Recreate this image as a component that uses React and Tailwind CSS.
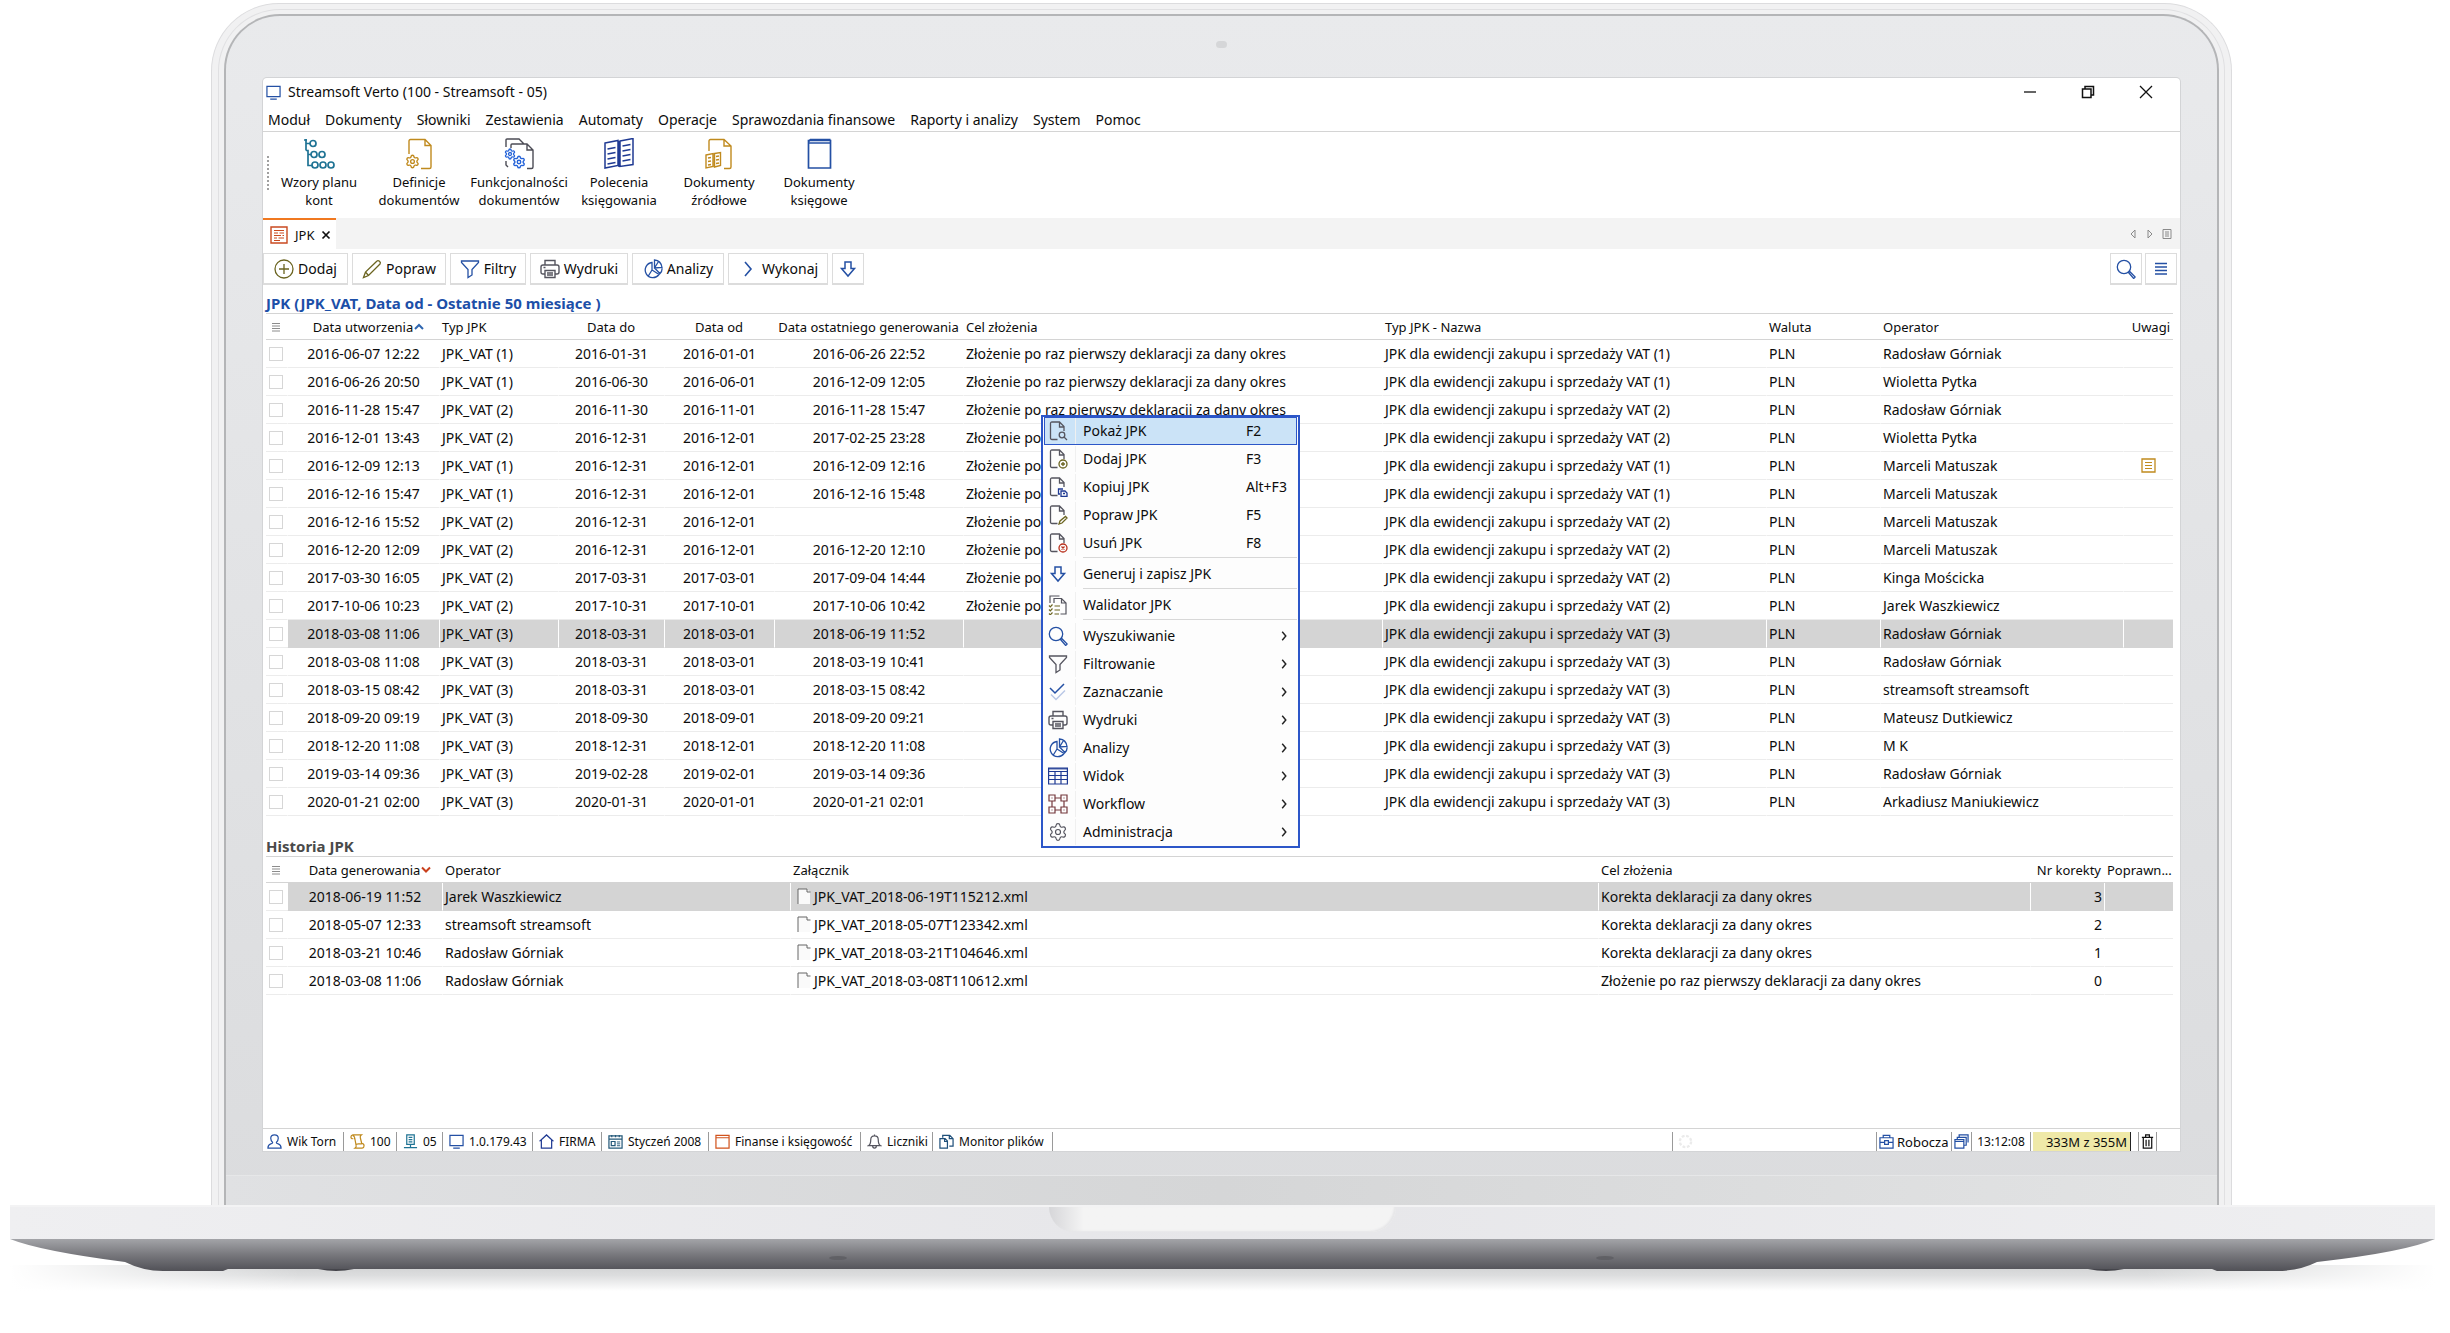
import React from "react";
import { Settings } from "lucide-react";

const BLUE = "#2450a4";
const NAVY = "#1f3a93";
const GOLD = "#c08a1e";
const GREY = "#55555f";
const OLIVE = "#6b6420";

function Icon({ size = 20, box = 20, color = GREY, width = 1.3, className = "", children }) {
  return (
    <svg width={size} height={size} viewBox={`0 0 ${box} ${box}`} fill="none" stroke={color} strokeWidth={width} className={`shrink-0 ${className}`} aria-hidden="true">
      {children}
    </svg>
  );
}

/* toolbar icons */
const TreeIcon = () => (
  <Icon size={32} box={32} color="#1f7394" width={1.7}>
    <path d="M1 2h3M3 1v11.500M3 5.500h4M3 12.500h2v15h4M5 16.500h3" />
    <circle cx="10" cy="5.500" r="3" />
    <circle cx="11" cy="16.500" r="3" />
    <circle cx="19" cy="16.500" r="3" />
    <circle cx="12" cy="27" r="3" />
    <circle cx="20" cy="27" r="3" />
    <circle cx="28" cy="27" r="3" />
  </Icon>
);
const DocGearIcon = () => (
  <Icon size={32} box={32} color={GOLD} width={1.4}>
    <path d="M6 16V3q0-1.500 1.500-1.500H22l6 6V29q0 1.500-1.500 1.500H18M22 2v5.500h5.500" />
    <Settings x="2" y="16" size={15} color={GOLD} strokeWidth={2.200} />
  </Icon>
);
const DocsGearsIcon = () => (
  <Icon size={32} box={32} color="#4c4c55" width={1.4}>
    <path d="M3 9V2q0-1 1-1h12l5 5M8 10V7q0-1 1-1h15l6 6v17q0 1.500-1.500 1.500H24M24 6.500V12h5.500M3 23v4l2 2" />
    <Settings x="1" y="10" size={12} color="#2563d8" strokeWidth={2.600} />
    <Settings x="9" y="17" size={14} color="#2563d8" strokeWidth={2.400} />
  </Icon>
);
const LedgerIcon = () => (
  <Icon size={32} box={32} color={NAVY} width={1.5}>
    <path d="M2 5l13-2.500v25L2 30zM17 3l13-2.500v26L17 28.500zM16 3v26M4.500 11l8-1.500M4.500 16l8-1.500M4.500 21l8-1.500M4.500 26l8-1.500M19.500 8l8-1.500M19.500 13l8-1.500M19.500 18l8-1.500M19.500 23l8-1.500" />
  </Icon>
);
const DocLedgerIcon = () => (
  <Icon size={32} box={32} color={GOLD} width={1.4}>
    <path d="M6 13V3q0-1.500 1.500-1.500H21l7 6.500V29q0 1.500-1.500 1.500H21M21 2v6h6.500" />
    <path d="M3 17l7-1.500v13L3 30zM11.500 15.500l6-1v13l-6 1.500zM5 20l3-.500M5 23.500l3-.500M5 27l3-.500M13 18.500l3-.500M13 22l3-.500M13 25.500l3-.500" />
  </Icon>
);
const BookIcon = () => (
  <Icon size={32} box={32} color={BLUE} width={1.7}>
    <path d="M5.500 2.500h22v27.500h-22zM5.500 5h22" />
    <path d="M27.500 1.500h-20l-2 2" />
  </Icon>
);

/* action icons, 20px grid */
const PlusIcon = () => (
  <Icon color={OLIVE}>
    <circle cx="10" cy="10" r="9" />
    <path d="M10 5v10M5 10h10" />
  </Icon>
);
const PencilIcon = () => (
  <Icon color={OLIVE}>
    <path d="M1.500 18.500l2-5.500L15 2q1-1 2.500.300T18 5L6.500 16.500zM3.500 13l3 3.500" />
  </Icon>
);
const FunnelIcon = ({ color = BLUE }) => (
  <Icon color={color}>
    <path d="M1.500 2h17v1.500L12 10.500V16l-4 2.500v-8L1.500 3.500z" />
  </Icon>
);
const PrinterIcon = () => (
  <Icon color={GREY} width={1.4}>
    <path d="M5 6V1.500h10V6M5 15H3q-2 0-2-2V8q0-2 2-2h14q2 0 2 2v5q0 2-2 2h-2M5 11.500h10v7H5zM7 14h6M7 16h6M3.500 8.500h2" />
  </Icon>
);
const PieIcon = () => (
  <Icon color={BLUE}>
    <path d="M9 3.500A7.600 7.600 0 1 0 16 15.500L9 11zM9 11l-4 6.500M11.500 9V1q6.500.500 7.500 7.500zM11.500 9l4-6.500M19 8.500q.500 3.500-2 6l-5.500-5.500" />
  </Icon>
);
const ArrowDownIcon = () => (
  <Icon color={BLUE} width={1.5}>
    <path d="M7 3h6v6.500h3.500L10 17 3.500 9.500H7z" />
  </Icon>
);
const SearchIcon = () => (
  <Icon color={BLUE}>
    <circle cx="8" cy="8" r="6.700" />
    <path d="M12.500 13.500l1.200-1 5.500 5.500-1.500 1.500z" />
  </Icon>
);
const LinesIcon = () => (
  <Icon size={14} box={14} color={BLUE} width={1.7}>
    <path d="M1 1.500h12M1 5h12M1 8.500h12M1 12h12" />
  </Icon>
);
const ChevronIcon = ({ size = 20, color = BLUE, width = 1.6 }) => (
  <Icon size={size} color={color} width={width}>
    <path d="M7 3l6 7-6 7" />
  </Icon>
);

/* context menu icons */
function DocIcon({ children }) {
  return (
    <Icon>
      <path d="M9.500 18.500H4q-1.500 0-1.500-1.500V2.500Q2.500 1 4 1h7.500L16 5.500V10M11.500 1v5H16" />
      {children}
    </Icon>
  );
}
const DocSearch = () => (
  <DocIcon>
    <circle cx="14" cy="14" r="2.800" />
    <path d="M16 16l3 3" />
  </DocIcon>
);
const DocPlus = () => (
  <DocIcon>
    <g stroke={OLIVE}>
      <circle cx="15" cy="15" r="4" />
      <path d="M15 13v4M13 15h4" />
    </g>
  </DocIcon>
);
const DocCopy = () => (
  <DocIcon>
    <path d="M12 17h-1.500v-5H15M13 14h4l2 2v3.500h-6zM15 16.500h2" stroke={NAVY} />
  </DocIcon>
);
const DocEdit = () => (
  <DocIcon>
    <path d="M11 19l1-3 5.500-4.500 1.500 1.500-5 5z" stroke={OLIVE} />
  </DocIcon>
);
const DocDelete = () => (
  <DocIcon>
    <g stroke="#b8301c">
      <circle cx="15" cy="15" r="4" />
      <path d="M13.500 13.500l3 3M16.500 13.500l-3 3" />
    </g>
  </DocIcon>
);
const ValidatorIcon = () => (
  <Icon width={1.2}>
    <path d="M2 8V1h9.500M6 8V3.500h7.500L18 8v11h-5.500M13.500 4v4H18" />
    <path d="M1 10.500l1.300 1.300L4.500 9.500M1 14.500l1.300 1.300L4.500 13.500M1 18.500l1.300 1.300L4.500 17.500M6.500 11H12M6.500 15H12M6.500 19H11" stroke={OLIVE} />
  </Icon>
);
const CheckIcon = () => (
  <Icon color={BLUE} width={1.5}>
    <path d="M3 12.500l5 5 9-9" stroke="#b9c7e6" />
    <path d="M2 6l5 5L16 2" />
  </Icon>
);
const GridIcon = () => (
  <Icon color={NAVY} width={1.2}>
    <path d="M.600 2h18.800v16H.600zM.600 5.500h18.800M.600 9.500h18.800M.600 13.500h18.800M7 5.500V18M13 5.500V18" />
    <path d="M.600 2.800h18.800" />
  </Icon>
);
const WorkflowIcon = () => (
  <Icon color="#74383c" width={1.2}>
    <path d="M1 1h6v6H1zM13 1h6v6h-6zM1 13h6v6H1zM13 13h6v6h-6zM7 4h6M7 16h6M4 7v6M16 7v6" />
    <path d="M3.500 4h1M15.500 4h1M3.500 16h1M15.500 16h1" />
  </Icon>
);
const GearIcon = () => <Settings size={20} color={GREY} strokeWidth={1.400} className="shrink-0" aria-hidden="true" />;

/* small icons: window title and status bar */
function Small({ color, children }) {
  return (
    <Icon size={15} box={16} color={color} width={1.3}>
      {children}
    </Icon>
  );
}
const MonitorIcon = () => (
  <Small color={BLUE}>
    <path d="M1 1.500h14v11H1zM4.500 15h7" />
  </Small>
);
const UserIcon = () => (
  <Small color={BLUE}>
    <path d="M6 9Q4 7 4 4.500 4 1 8 1t4 3.500Q12 7 10 9q0 1 2 1.500 3 .800 3 4.500H1q0-3.700 3-4.500Q6 10 6 9z" />
  </Small>
);
const ScrollIcon = () => (
  <Small color={GOLD}>
    <path d="M3 5Q1 5 1 3.200T3 1h9q-1.500 1-1 3l1.500 6q2.500.300 2.500 2.500T13 15H5.500q1.500-1 1-3L5 4q-.300-2-2-2M4 5h1M6.500 12.500Q6 10.500 9 10.500h3.500" />
  </Small>
);
const ServerIcon = () => (
  <Small color="#1f7394">
    <path d="M4 1h8v10H4zM6 3.500h4M6 6h4M6 8.500h4M8 11v3.500M1 14.500h14" />
  </Small>
);
const HouseIcon = () => (
  <Small color={NAVY}>
    <path d="M2.500 15V7H1.500L8 1l6.500 6h-1v8z" />
  </Small>
);
const CalendarIcon = () => (
  <Small color="#25597a">
    <path d="M1 2h14v13H1zM1 5.500h14M4 1v2.500M8 1v2.500M12 1v2.500M3.500 8h4v4.500h-4z" />
    <path d="M9.500 8.500H13M9.500 10.500H13M9.500 12.500H13" strokeWidth="1" />
  </Small>
);
const ModuleIcon = () => (
  <Small color="#d1531d">
    <path d="M1 1.500h14V15H1zM1 4h14" />
  </Small>
);
const BellIcon = () => (
  <Small color={GREY}>
    <path d="M1.500 12.500Q4 11 4 6q0-4 4-4t4 4q0 5 2.500 6.500zM6 12.500q0 2.500 2 2.500t2-2.500M8 2V.500" />
  </Small>
);
const FilesIcon = () => (
  <Small color="#1f4f7a">
    <path d="M1 5h5.500L9 7.500V15H1zM6 5v3h3M4 4V1.500h7.500L15 5v8h-4M11 1.500V5h4" />
  </Small>
);
const CaseIcon = () => (
  <Small color={BLUE}>
    <path d="M1 4h14v11H1zM4.500 4V1.500h7V4M1 9h5M10 9h5M6 7h4v4H6z" />
  </Small>
);
const WindowsIcon = () => (
  <Small color={BLUE}>
    <path d="M1 6h9.500v9H1zM1 8h9.500M3.500 5.500v-2H13V12h-2M5.500 3V1H15v8" />
  </Small>
);
const TrashIcon = () => (
  <Small color="#111">
    <path d="M2 3.500h12M6 3V1h4v2M3.500 4v11h9V4M6.500 6v7M9.500 6v7" />
  </Small>
);
const SpinnerIcon = () => (
  <Small color="#ebebeb">
    <circle cx="8" cy="8" r="6" strokeWidth="2.500" strokeDasharray="3 1.700" />
  </Small>
);

const menus = ["Moduł", "Dokumenty", "Słowniki", "Zestawienia", "Automaty", "Operacje", "Sprawozdania finansowe", "Raporty i analizy", "System", "Pomoc"];

const shortcuts = [
  [TreeIcon, "Wzory planu", "kont"],
  [DocGearIcon, "Definicje", "dokumentów"],
  [DocsGearsIcon, "Funkcjonalności", "dokumentów"],
  [LedgerIcon, "Polecenia", "księgowania"],
  [DocLedgerIcon, "Dokumenty", "źródłowe"],
  [BookIcon, "Dokumenty", "księgowe"],
];

const FIRST = "Złożenie po raz pierwszy deklaracji za dany okres";
const FIX = "Korekta deklaracji za dany okres";

const rows = [
  ["2016-06-07 12:22", 1, "2016-01-31", "2016-01-01", "2016-06-26 22:52", FIRST, "Radosław Górniak"],
  ["2016-06-26 20:50", 1, "2016-06-30", "2016-06-01", "2016-12-09 12:05", FIRST, "Wioletta Pytka"],
  ["2016-11-28 15:47", 2, "2016-11-30", "2016-11-01", "2016-11-28 15:47", FIRST, "Radosław Górniak"],
  ["2016-12-01 13:43", 2, "2016-12-31", "2016-12-01", "2017-02-25 23:28", FIRST, "Wioletta Pytka"],
  ["2016-12-09 12:13", 1, "2016-12-31", "2016-12-01", "2016-12-09 12:16", FIRST, "Marceli Matuszak", true],
  ["2016-12-16 15:47", 1, "2016-12-31", "2016-12-01", "2016-12-16 15:48", FIRST, "Marceli Matuszak"],
  ["2016-12-16 15:52", 2, "2016-12-31", "2016-12-01", "", FIRST, "Marceli Matuszak"],
  ["2016-12-20 12:09", 2, "2016-12-31", "2016-12-01", "2016-12-20 12:10", FIRST, "Marceli Matuszak"],
  ["2017-03-30 16:05", 2, "2017-03-31", "2017-03-01", "2017-09-04 14:44", FIRST, "Kinga Mościcka"],
  ["2017-10-06 10:23", 2, "2017-10-31", "2017-10-01", "2017-10-06 10:42", FIRST, "Jarek Waszkiewicz"],
  ["2018-03-08 11:06", 3, "2018-03-31", "2018-03-01", "2018-06-19 11:52", "", "Radosław Górniak"],
  ["2018-03-08 11:08", 3, "2018-03-31", "2018-03-01", "2018-03-19 10:41", "", "Radosław Górniak"],
  ["2018-03-15 08:42", 3, "2018-03-31", "2018-03-01", "2018-03-15 08:42", "", "streamsoft streamsoft"],
  ["2018-09-20 09:19", 3, "2018-09-30", "2018-09-01", "2018-09-20 09:21", "", "Mateusz Dutkiewicz"],
  ["2018-12-20 11:08", 3, "2018-12-31", "2018-12-01", "2018-12-20 11:08", "", "M K"],
  ["2019-03-14 09:36", 3, "2019-02-28", "2019-02-01", "2019-03-14 09:36", "", "Radosław Górniak"],
  ["2020-01-21 02:00", 3, "2020-01-31", "2020-01-01", "2020-01-21 02:01", "", "Arkadiusz Maniukiewicz"],
];

const history = [
  ["2018-06-19 11:52", "Jarek Waszkiewicz", "JPK_VAT_2018-06-19T115212.xml", FIX, 3],
  ["2018-05-07 12:33", "streamsoft streamsoft", "JPK_VAT_2018-05-07T123342.xml", FIX, 2],
  ["2018-03-21 10:46", "Radosław Górniak", "JPK_VAT_2018-03-21T104646.xml", FIX, 1],
  ["2018-03-08 11:06", "Radosław Górniak", "JPK_VAT_2018-03-08T110612.xml", FIRST, 0],
];

const contextMenu = [
  [
    [DocSearch, "Pokaż JPK", "F2"],
    [DocPlus, "Dodaj JPK", "F3"],
    [DocCopy, "Kopiuj JPK", "Alt+F3"],
    [DocEdit, "Popraw JPK", "F5"],
    [DocDelete, "Usuń JPK", "F8"],
  ],
  [[ArrowDownIcon, "Generuj i zapisz JPK", ""]],
  [[ValidatorIcon, "Walidator JPK", ""]],
  [
    [SearchIcon, "Wyszukiwanie"],
    [() => <FunnelIcon color={GREY} />, "Filtrowanie"],
    [CheckIcon, "Zaznaczanie"],
    [PrinterIcon, "Wydruki"],
    [PieIcon, "Analizy"],
    [GridIcon, "Widok"],
    [WorkflowIcon, "Workflow"],
    [GearIcon, "Administracja"],
  ],
];

function TitleBar() {
  return (
    <header className="flex h-[28px] items-center justify-between pl-[3px] pr-[22px]">
      <div className="flex items-center gap-[7px]">
        <MonitorIcon />
        <h1>Streamsoft Verto (100 - Streamsoft - 05)</h1>
      </div>
      <div className="flex gap-[34px]">
        <button aria-label="Minimalizuj" className="flex w-6 justify-center">
          <Icon size={14} box={14} color="#111"><path d="M1 7h12" /></Icon>
        </button>
        <button aria-label="Przywróć" className="flex w-6 justify-center">
          <Icon size={14} box={14} color="#111" width={1.5}><path d="M1.500 4h8.500v8.500H1.500zM4 4V1.500h8.500V10H10" /></Icon>
        </button>
        <button aria-label="Zamknij" className="flex w-6 justify-center">
          <Icon size={14} box={14} color="#111"><path d="M1 1l12 12M13 1L1 13" /></Icon>
        </button>
      </div>
    </header>
  );
}

function MenuBar() {
  return (
    <nav className="flex h-[26px] items-center gap-[15px] border-b border-[#d4d4d4] pl-[5px] pt-[3px]">
      {menus.map((m) => (
        <button key={m}>{m}</button>
      ))}
    </nav>
  );
}

function Shortcuts() {
  return (
    <div className="flex h-[86px] items-start pl-1 pt-[6px]">
      <div className="mt-[18px] h-[34px] border-l-2 border-dotted border-[#a0a0a0]" />
      {shortcuts.map(([Pic, a, b]) => (
        <button key={a + b} className="flex w-[100px] flex-col items-center text-[13px] leading-[18px]">
          <Pic />
          <span className="mt-[3px]">{a}</span>
          <span>{b}</span>
        </button>
      ))}
    </div>
  );
}

function TabStrip() {
  return (
    <div className="flex h-[31px] items-center justify-between bg-[#f3f3f3] pr-2">
      <div className="flex h-full w-[73px] items-center gap-[7px] border-t-2 border-[#f07820] bg-white pl-[7px] text-[13px]">
        <Icon size={18} box={18} color="#c94a20" width={1.4}>
          <path d="M1 1h16v16H1z" />
          <path d="M4 4.500h10M4 7h4M9.500 7H14M4 9.500h7M12.500 9.500H14M4 12h3M8.500 12H14M4 14.500h6" strokeWidth="1.200" />
        </Icon>
        <span>JPK</span>
        <button aria-label="Zamknij kartę">
          <Icon size={10} box={10} color="#111" width={1.7}><path d="M1.500 1.500l7 7M8.500 1.500l-7 7" /></Icon>
        </button>
      </div>
      <div className="flex items-center gap-[7px]">
        <button aria-label="Poprzednia karta"><Icon size={10} box={10} color="#8a8a8a" width={1}><path d="M7 1L3 5l4 4z" /></Icon></button>
        <button aria-label="Następna karta"><Icon size={10} box={10} color="#8a8a8a" width={1}><path d="M3 1l4 4-4 4z" /></Icon></button>
        <button aria-label="Lista kart"><Icon size={10} box={10} color="#8a8a8a" width={1}><path d="M1 .500h8v9H1zM3 3h4M3 5h4M3 7h4" /></Icon></button>
      </div>
    </div>
  );
}

function ToolButton({ icon: Pic, label, title, className = "" }) {
  return (
    <button aria-label={label || title} className={`flex h-full items-center justify-center gap-1 border border-[#dcdcdc] bg-white shadow-[0_1px_0_#dcdcdc] ${className}`}>
      <Pic />
      {label && <span>{label}</span>}
    </button>
  );
}

function Toolbar() {
  return (
    <div className="mt-1 flex h-[31px] justify-between pr-[3px]">
      <div className="flex gap-1">
        <ToolButton icon={PlusIcon} label="Dodaj" className="w-[85px]" />
        <ToolButton icon={PencilIcon} label="Popraw" className="w-[94px]" />
        <ToolButton icon={FunnelIcon} label="Filtry" className="w-[76px]" />
        <ToolButton icon={PrinterIcon} label="Wydruki" className="w-[98px]" />
        <ToolButton icon={PieIcon} label="Analizy" className="w-[92px]" />
        <ToolButton icon={ChevronIcon} label="Wykonaj" className="w-[100px]" />
        <ToolButton icon={ArrowDownIcon} title="Więcej" className="w-8" />
      </div>
      <div className="flex gap-[3px]">
        <ToolButton icon={SearchIcon} title="Szukaj" className="w-8" />
        <ToolButton icon={LinesIcon} title="Opcje" className="w-8" />
      </div>
    </div>
  );
}

function Th({ children, align = "text-left" }) {
  return <th className={`h-[27px] whitespace-nowrap border-y border-[#d4d4d4] px-[3px] py-0 text-[13px] font-normal ${align}`}>{children}</th>;
}

function Td({ children, selected, className = "" }) {
  const look = selected ? "border-b-[#d4d4d4] border-l border-l-white bg-[#d4d4d4]" : "border-l border-l-transparent border-b-[#ececec]";
  return <td className={`h-[28px] truncate border-b px-[2px] py-0 ${look} ${className}`}>{children}</td>;
}

function CheckCell({ label }) {
  return (
    <td className="h-[28px] border-b border-[#ececec] p-0 pl-[3px]">
      <input type="checkbox" aria-label={label} className="block size-[14px] appearance-none border border-[#d6d6d6] bg-white" />
    </td>
  );
}

function ListTh() {
  return (
    <Th>
      <Icon size={10} box={10} color="#8c8c8c" width={1} className="ml-[2px]"><path d="M1 1.500h8M1 4h8M1 6.500h8M1 9h8" /></Icon>
    </Th>
  );
}

function SortLabel({ children, down }) {
  return (
    <span className="relative">
      {children}
      <svg width="10" height="8" viewBox="0 0 10 8" fill="none" strokeWidth="2" stroke={down ? "#c9401c" : "#2f66b0"} className="absolute left-full top-[5px] ml-px" aria-hidden="true">
        <path d={down ? "M1 1.500l4 4 4-4" : "M1 6l4-4 4 4"} />
      </svg>
    </span>
  );
}

function JpkTable() {
  return (
    <table className="w-full table-fixed border-separate border-spacing-0">
      <colgroup>
        <col className="w-[21px]" />
        <col className="w-[152px]" />
        <col className="w-[119px]" />
        <col className="w-[106px]" />
        <col className="w-[110px]" />
        <col className="w-[189px]" />
        <col />
        <col className="w-[384px]" />
        <col className="w-[114px]" />
        <col className="w-[243px]" />
        <col className="w-[50px]" />
      </colgroup>
      <thead>
        <tr>
          <ListTh />
          <Th align="text-center"><SortLabel>Data utworzenia</SortLabel></Th>
          <Th>Typ JPK</Th>
          <Th align="text-center">Data do</Th>
          <Th align="text-center">Data od</Th>
          <Th align="text-center">Data ostatniego generowania</Th>
          <Th>Cel złożenia</Th>
          <Th>Typ JPK - Nazwa</Th>
          <Th>Waluta</Th>
          <Th>Operator</Th>
          <Th align="text-right">Uwagi</Th>
        </tr>
      </thead>
      <tbody>
        {rows.map(([created, type, to, from, last, purpose, operator, note], i) => {
          const selected = i === 10;
          return (
            <tr key={created}>
              <CheckCell label={created} />
              <Td selected={selected} className="text-center">{created}</Td>
              <Td selected={selected}>JPK_VAT ({type})</Td>
              <Td selected={selected} className="text-center">{to}</Td>
              <Td selected={selected} className="text-center">{from}</Td>
              <Td selected={selected} className="text-center">{last}</Td>
              <Td selected={selected}>{purpose}</Td>
              <Td selected={selected}>JPK dla ewidencji zakupu i sprzedaży VAT ({type})</Td>
              <Td selected={selected}>PLN</Td>
              <Td selected={selected}>{operator}</Td>
              <Td selected={selected}>
                {note && (
                  <Icon size={15} box={15} color={GOLD} className="mx-auto"><path d="M1 1h13v13H1z" /><path d="M4 4.500h7M4 7.500h7M4 10.500h7" strokeWidth="1" /></Icon>
                )}
              </Td>
            </tr>
          );
        })}
      </tbody>
    </table>
  );
}

function HistoryTable() {
  return (
    <table className="w-full table-fixed border-separate border-spacing-0">
      <colgroup>
        <col className="w-[21px]" />
        <col className="w-[155px]" />
        <col className="w-[348px]" />
        <col />
        <col className="w-[432px]" />
        <col className="w-[74px]" />
        <col className="w-[69px]" />
      </colgroup>
      <thead>
        <tr>
          <ListTh />
          <Th align="text-center"><SortLabel down>Data generowania</SortLabel></Th>
          <Th>Operator</Th>
          <Th>Załącznik</Th>
          <Th>Cel złożenia</Th>
          <Th align="text-right">Nr korekty</Th>
          <Th>Poprawn...</Th>
        </tr>
      </thead>
      <tbody>
        {history.map(([date, operator, file, purpose, nr], i) => {
          const selected = i === 0;
          return (
            <tr key={date}>
              <CheckCell label={date} />
              <Td selected={selected} className="text-center">{date}</Td>
              <Td selected={selected}>{operator}</Td>
              <Td selected={selected}>
                <a href="#" className="flex items-center gap-[3px] pl-1">
                  <svg width="14" height="17" viewBox="0 0 14 17" fill="#fafafa" aria-hidden="true">
                    <path d="M1 16V1h9l3 3v12z" />
                    <path d="M1 16V1h9v3h3.500" fill="none" stroke="#666" />
                  </svg>
                  {file}
                </a>
              </Td>
              <Td selected={selected}>{purpose}</Td>
              <Td selected={selected} className="text-right">{nr}</Td>
              <Td selected={selected} />
            </tr>
          );
        })}
      </tbody>
    </table>
  );
}

function ContextMenu() {
  return (
    <div role="menu" className="absolute left-[778px] top-[337px] w-[259px] border-2 border-[#2c56c8] bg-[#fdfdfd] px-px">
      {contextMenu.map((group, g) => (
        <div key={g}>
          {g > 0 && <hr className="ml-[39px] h-[3px] border-0 border-t border-[#d8d8d8]" />}
          {group.map(([Pic, label, keys], i) => (
            <button
              key={label}
              role="menuitem"
              className={`flex h-[28px] w-full items-center border pr-[3px] text-left ${g === 0 && i === 0 ? "border-[#2c56c8] bg-[#cbe3f7]" : "border-transparent"}`}
            >
              <span className="ml-[3px] mr-[7px] flex"><Pic /></span>
              <span className="h-full w-2 border-l border-[#f0f0f0]" />
              <span className="flex-1">{label}</span>
              {keys === undefined ? <span className="mr-[3px]"><ChevronIcon size={12} color="#222" width={2.4} /></span> : <span className="w-[47px] whitespace-nowrap">{keys}</span>}
            </button>
          ))}
        </div>
      ))}
    </div>
  );
}

function Status({ icon: Pic, children, className = "" }) {
  return (
    <div className={`flex h-full items-center whitespace-nowrap border-r border-[#9a9a9a] ${className}`}>
      {Pic && <Pic />}
      {children}
    </div>
  );
}

function StatusBar() {
  return (
    <footer className="flex h-[23px] items-end justify-between border-t border-[#d4d4d4] pl-1 text-[12px]">
      <div className="flex h-[19px]">
        <Status icon={UserIcon} className="w-[77px] gap-[5px]">Wik Torn</Status>
        <Status icon={ScrollIcon} className="w-[53px] gap-[5px] pl-[6px]">100</Status>
        <Status icon={ServerIcon} className="w-[46px] gap-[5px] pl-[6px]">05</Status>
        <Status icon={MonitorIcon} className="w-[90px] gap-[5px] pl-[6px]">1.0.179.43</Status>
        <Status icon={HouseIcon} className="w-[69px] gap-[5px] pl-[6px]">FIRMA</Status>
        <Status icon={CalendarIcon} className="w-[107px] gap-[5px] pl-[6px]">Styczeń 2008</Status>
        <Status icon={ModuleIcon} className="w-[152px] gap-[5px] pl-[6px]">Finanse i księgowość</Status>
        <Status icon={BellIcon} className="w-[72px] gap-[5px] pl-[6px]">Liczniki</Status>
        <Status icon={FilesIcon} className="w-[120px] gap-[5px] pl-[6px]">Monitor plików</Status>
      </div>
      <div className="flex h-[19px] pr-[23px]">
        <Status icon={SpinnerIcon} className="w-[205px] border-l pl-[5px]" />
        <Status icon={CaseIcon} className="w-[75px] gap-[3px] pl-[2px] text-[13px]">Robocza</Status>
        <Status icon={WindowsIcon} className="w-5 pl-[2px]" />
        <Status className="w-[59px] justify-center">13:12:08</Status>
        <Status className="ml-[2px] w-[98px] justify-end border-r-[#222] bg-[#efe9a8] pr-[3px] text-[13px]">333M z 355M</Status>
        <div className="ml-[7px] flex w-[19px] items-center justify-center border-x border-[#9a9a9a]">
          <button aria-label="Zwolnij pamięć"><TrashIcon /></button>
        </div>
      </div>
    </footer>
  );
}

function AppWindow() {
  return (
    <div className="relative rounded-t-sm bg-white text-[14px] leading-5 text-[#0c0c0c] shadow-[0_0_0_1px_#d3d4d6]">
      <TitleBar />
      <MenuBar />
      <Shortcuts />
      <TabStrip />
      <Toolbar />
      <main className="min-h-[844px] pl-[3px] pr-[7px]">
        <h2 className="h-[29px] pt-[9px] text-[15px] font-bold text-[#1c4fa8]">JPK (JPK_VAT, Data od - Ostatnie 50 miesiące )</h2>
        <JpkTable />
        <h2 className="h-[40px] pt-5 text-[15px] font-bold text-[#4a4a4a]">Historia JPK</h2>
        <HistoryTable />
      </main>
      <StatusBar />
      <ContextMenu />
    </div>
  );
}

function LaptopBase() {
  return (
    <div className="ml-[10px] mr-[15px]">
      <div className="flex h-[34px] justify-center border-t-2 border-[#f3f3f4] bg-linear-to-r from-[#efeff1] via-[#e6e6e9] to-[#efeff1]">
        <div className="h-[25px] w-[347px] rounded-b-[25px] bg-linear-to-r from-[#d6d6d9] via-[#f4f4f4] via-10% to-[#f4f4f4] shadow-[inset_-2px_-1px_2px_#e6e6e8]" />
      </div>
      <svg width="100%" height="54" viewBox="0 0 2425 54" preserveAspectRatio="none" className="block" aria-hidden="true">
        <defs>
          <linearGradient id="metal" x1="0" x2="0" y1="0" y2="1">
            <stop offset="0" stopColor="#a3a4a8" />
            <stop offset=".5" stopColor="#77777c" />
            <stop offset="1" stopColor="#515157" />
          </linearGradient>
          <linearGradient id="shade" x1="0" x2="0" y1="0" y2="1">
            <stop offset="0" stopColor="#cfd0d1" />
            <stop offset=".4" stopColor="#dcddde" />
            <stop offset="1" stopColor="#fff" />
          </linearGradient>
          <linearGradient id="fade" x1="0" x2="1" y1="0" y2="0">
            <stop offset="0" stopColor="#fff" />
            <stop offset=".12" stopColor="#fff" stopOpacity="0" />
            <stop offset=".88" stopColor="#fff" stopOpacity="0" />
            <stop offset="1" stopColor="#fff" />
          </linearGradient>
        </defs>
        <rect y="26" width="2425" height="26" fill="url(#shade)" />
        <rect y="26" width="2425" height="26" fill="url(#fade)" />
        <path d="M0 0h2425q-30 13-118 23-18 9-40 9h-60l-5-2H218l-5 2h-60q-20 0-38-9Q30 12 0 0z" fill="url(#metal)" />
        <path d="M308 30h36q-18 4-36 0zM2078 30h36q-18 4-36 0z" fill="#45454b" />
        <ellipse cx="828" cy="19" rx="9" ry="2" fill="#606065" />
        <ellipse cx="1595" cy="19" rx="9" ry="2" fill="#606065" />
      </svg>
    </div>
  );
}

export default function App() {
  return (
    <div className="min-h-screen w-full bg-white pt-[3px] font-['Noto_Sans','Open_Sans',sans-serif]">
      <div className="ml-[211px] mr-[218px] rounded-t-[68px] border-x border-t border-[#dcdcde] bg-[#f1f1f2] px-[6px] pt-[5px]">
        <div className="rounded-t-[62px] border-x border-t border-[#e0e0e2] px-[5px] pt-[4px]">
          <div className="rounded-t-[56px] border-x-2 border-t-2 border-[#b4b5b7] bg-linear-to-b from-[#e9eaec] to-[#dbdcde]">
            <div className="flex h-[62px] items-center justify-center">
              <div className="mt-[-6px] h-[7px] w-[11px] rounded-full bg-[#d5d6d8]" />
            </div>
            <div className="px-[37px]">
              <AppWindow />
            </div>
            <div className="h-[25px] border-b border-[#e6e7e8]" />
            <div className="h-[29px] bg-linear-to-r from-[#e0e1e3] via-[#d5d6d7] to-[#e2e3e4]" />
          </div>
        </div>
      </div>
      <LaptopBase />
    </div>
  );
}
